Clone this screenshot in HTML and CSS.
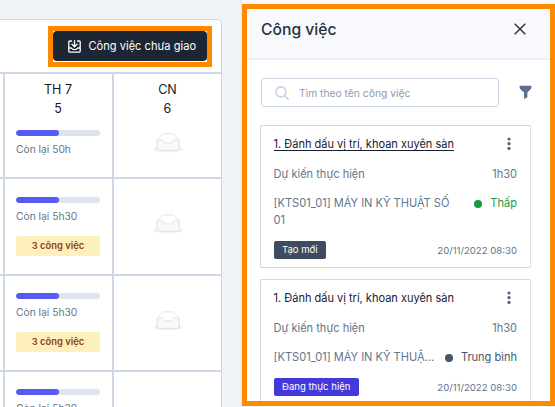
FILE: index.html
```html
<!DOCTYPE html>
<html lang="vi">
<head>
<meta charset="utf-8">
<title>Công việc</title>
<link rel="stylesheet" href="styles.css">
</head>
<body>
<svg class="defs" width="0" height="0">
  <symbol id="empty" viewBox="0 0 30 20">
    <ellipse cx="15" cy="16.2" rx="15" ry="3.2" fill="#f2f2f2"/>
    <path d="M4.3 7 9.3 1.3Q9.6.9 10.2.9H20Q20.6.9 21 1.3L26 7V16.2Q26 17.4 24.8 17.4H5.5Q4.3 17.4 4.3 16.2Z" fill="#fff" stroke="#dedede" stroke-width=".8"/>
    <path d="M4.3 7H9.4Q10.3 7 10.3 8 10.3 9.9 12 9.9H18.4Q20 9.9 20 8 20 7 20.9 7H26V16.2Q26 17.4 24.8 17.4H5.5Q4.3 17.4 4.3 16.2Z" fill="#f9f9f9" stroke="#dedede" stroke-width=".8"/>
  </symbol>
  <symbol id="dots" viewBox="0 0 4 14">
    <circle cx="2" cy="2" r="1.6"/><circle cx="2" cy="6.7" r="1.6"/><circle cx="2" cy="11.4" r="1.6"/>
  </symbol>
</svg>
<div class="app">
  <main class="board">
    <header class="toolbar">
      <div class="highlight">
        <button class="assign">
          <svg width="13" height="13" viewBox="0 0 13 13" fill="none" stroke="#fff" stroke-width="1.3" stroke-linecap="round" stroke-linejoin="round"><path d="M3.5 1H1.9Q.8 1 .8 2.1V11Q.8 12.2 2 12.2H11Q12.2 12.2 12.2 11V2.1Q12.2 1 11.1 1H9.5M6.5.7V6.2M4 4.3 6.5 6.7 9 4.3M.8 8H3.3Q4.3 9.7 6.5 9.7T9.7 8H12.2"/></svg>
          <span>Công việc chưa giao</span>
        </button>
      </div>
    </header>
    <div class="grid">
      <div class="cell edge"></div>
      <div class="cell first"><div class="day">TH 7<br>5</div><div class="bar"><i></i></div><p class="left">Còn lại 50h</p></div>
      <div class="cell first none"><div class="day">CN<br>6</div><svg class="empty"><use href="#empty"/></svg></div>
      <div class="cell edge"></div>
      <div class="cell second"><div class="bar"><i></i></div><p class="left">Còn lại 5h30</p><div class="jobs">3 công việc</div></div>
      <div class="cell none"><svg class="empty"><use href="#empty"/></svg></div>
      <div class="cell edge"></div>
      <div class="cell"><div class="bar"><i></i></div><p class="left">Còn lại 5h30</p><div class="jobs">3 công việc</div></div>
      <div class="cell none"><svg class="empty"><use href="#empty"/></svg></div>
      <div class="cell edge"></div>
      <div class="cell"><div class="bar"><i></i></div><p class="left">Còn lại 5h30</p></div>
      <div class="cell none"></div>
    </div>
  </main>
  <aside class="drawer">
    <div class="frame">
      <header class="head">
        <h1>Công việc</h1>
        <svg width="12" height="12" viewBox="0 0 12 12" fill="none" stroke="#34343c" stroke-width="1.5"><path d="M.7.7 11.3 11.3M11.3.7.7 11.3"/></svg>
      </header>
      <div class="find">
        <div class="search">
          <svg width="14" height="14" viewBox="0 0 14 14" fill="none" stroke="#c7d3e3" stroke-width="1.6" stroke-linecap="round"><circle cx="5.9" cy="5.9" r="5"/><path d="M9.6 9.6 13.2 13"/></svg>
          <span>Tìm theo tên công việc</span>
        </div>
        <svg class="filter" width="13" height="14" viewBox="0 0 13 14" fill="#5d6f89"><path d="M1.4.7H11.6Q12.4.7 12.4 1.5V2.8Q12.4 3.4 12 3.8L8.4 7.5V11.8Q8.4 12.3 8 12.6L6.2 13.5Q5 14 5 12.9V7.5L1 3.8Q.6 3.4.6 2.8V1.5Q.6.7 1.4.7Z"/></svg>
      </div>
      <article class="card">
        <div class="row title"><h2 class="linked">1. Đánh dấu vị trí, khoan xuyên sàn</h2><svg class="dots"><use href="#dots"/></svg></div>
        <div class="row plan"><span>Dự kiến thực hiện</span><span>1h30</span></div>
        <div class="row machine"><span class="name">[KTS01_01] MÁY IN KỸ THUẬT SỐ<br>01</span><span class="level low">Thấp</span></div>
        <div class="row foot"><span class="tag new">Tạo mới</span><time>20/11/2022 08:30</time></div>
      </article>
      <article class="card">
        <div class="row title"><h2>1. Đánh dấu vị trí, khoan xuyên sàn</h2><svg class="dots"><use href="#dots"/></svg></div>
        <div class="row plan"><span>Dự kiến thực hiện</span><span>1h30</span></div>
        <div class="row machine"><span class="name">[KTS01_01] MÁY IN KỸ THUẬ...</span><span class="level mid">Trung bình</span></div>
        <div class="row foot"><span class="tag doing">Đang thực hiện</span><time>20/11/2022 08:30</time></div>
      </article>
    </div>
  </aside>
</div>
</body>
</html>
```
FILE: styles.css
```css
* { box-sizing: border-box; margin: 0; padding: 0; }
body { font-family: Inter, "Liberation Sans", sans-serif; overflow: hidden; background: #edf3f7; }
svg { display: block; flex: none; }
.defs { display: none; }
.app { width: 555px; height: 407px; display: flex; justify-content: space-between; overflow: hidden; }

.board { width: 222px; height: 420px; margin-top: 19px; background: #fff; border: 1px solid #cdd7e5; border-left: 0; border-radius: 0 5px 0 0; }
.toolbar { height: 52px; display: flex; justify-content: flex-end; padding: 6px 9px 0 0; }
.highlight { width: 164px; height: 41px; border: 5px solid #ff8a00; background: #fff; }
.assign { width: 154px; height: 30px; border: 0; border-radius: 4px; background: #1d2635; color: #fff; display: flex; align-items: center; padding-left: 15px; gap: 7.5px; font: 11.1px Inter, sans-serif; white-space: nowrap; }
.grid { display: grid; grid-template-columns: 5px 109px 107px; grid-template-rows: 105px 97px 96px 60px; border-top: 2px solid #cdd7e5; }
.cell { padding: 17px 12px 0 11px; border-right: 2px solid #cdd7e5; border-bottom: 2px solid #cdd7e5; }
.edge { padding: 0; }
.none { border-right: 0; display: flex; flex-direction: column; align-items: center; padding: 35px 0 0; }
.cell.first { padding-top: 6px; }
.cell.second { padding-top: 18px; }
.day { font-size: 12.5px; line-height: 19px; text-align: center; color: #18181b; height: 50px; }
.empty { width: 30px; height: 20px; }
.first .empty { margin-top: 3px; }
.bar { height: 6px; border-radius: 3px; background: #dce3ed; overflow: hidden; }
.bar i { display: block; width: 43px; height: 6px; border-radius: 3px; background: #575aef; }
.left { font-size: 10.25px; line-height: 14px; margin-top: 6px; color: #64748b; white-space: nowrap; }
.jobs { height: 20px; margin-top: 13px; border-radius: 2px; background: #fdf0bd; color: #92400e; font-size: 9.4px; font-weight: 600; line-height: 20px; text-align: center; }

.drawer { width: 314px; padding-top: 4px; background: #f7f9fd; border-left: 1px solid #e2eaf2; }
.frame { width: 313px; height: 402px; border: 5px solid #ff8a00; background: #fff; overflow: hidden; }
.head { height: 51px; background: #f7f9fd; border-bottom: 2px solid #edf1f6; display: flex; justify-content: space-between; padding: 14px 24px 0 14px; }
.head h1 { font-size: 15.7px; font-weight: 500; line-height: 14px; color: #263141; }
.find { display: flex; align-items: center; justify-content: space-between; margin: 18px 18px 18px 14px; }
.filter { margin-bottom: 1px; }
.search { width: 238px; height: 29px; border: 1px solid #cdd8e6; border-radius: 3px; display: flex; align-items: center; gap: 10px; padding-left: 13px; font-size: 10.3px; color: #8b9bb2; }
.card { width: 271px; height: 143px; margin: 0 0 11px 13px; padding: 0 13px 0 12.5px; border: 1px solid #cdd8e6; border-right: 1px solid #d8e0ea; border-radius: 2px; font-size: 11.05px; color: #64748b; white-space: nowrap; }
.row { display: flex; justify-content: space-between; }
.title { padding-top: 11px; height: 34px; }
.title h2 { height: 14px; font-size: 11.03px; font-weight: 400; line-height: 15px; color: #18202f; }
.title .linked { border-bottom: 1px solid #18202f; }
.dots { width: 4px; height: 14px; margin-right: 6px; fill: #52627a; }
.plan { height: 35px; line-height: 29px; }
.machine { line-height: 17px; }
.level { display: flex; height: 17px; align-items: center; gap: 8px; }
.level::before { content: ""; width: 8px; height: 8px; border-radius: 50%; background: currentColor; }
.low { color: #169c43; }
.mid { color: #475569; }
.foot { margin-top: 12px; align-items: center; }
.foot time { font-size: 9.6px; }
.tag { height: 18px; padding: 0 8.5px; border-radius: 2px; font-size: 9.55px; line-height: 18px; color: #fff; }
.new { background: #3f4b5e; }
.doing { background: #4338dc; }
```
